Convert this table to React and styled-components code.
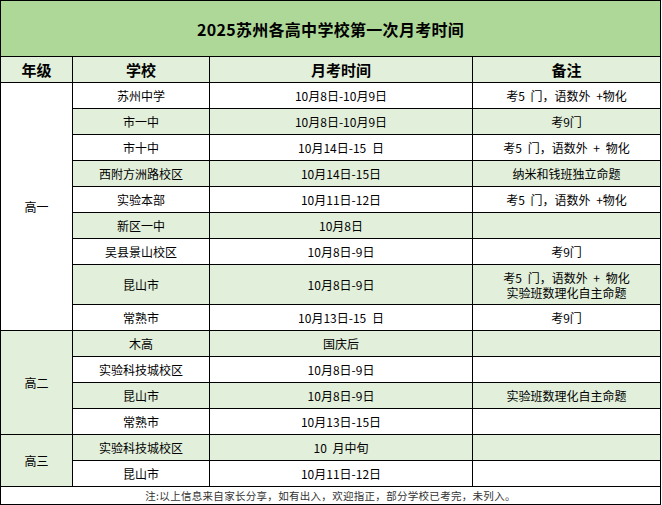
import React from 'react';
import styled, { createGlobalStyle } from 'styled-components';

const GlobalStyle = createGlobalStyle`
    html, body {
        margin: 0;
        padding: 0;
        background: #ffffff;
    }
    body {
        font-family: "Noto Sans CJK SC", "Liberation Sans", sans-serif;
        color: #000;
    }
`;

const groups = [
    {
        grade: '高一',
        bg: '#ffffff',
        rows: [
            { school: '苏州中学', date: '10月8日-10月9日', note: ['考5 门，语数外 +物化'] },
            { school: '市一中', date: '10月8日-10月9日', note: ['考9门'] },
            { school: '市十中', date: '10月14日-15 日', note: ['考5 门，语数外 + 物化'] },
            { school: '西附方洲路校区', date: '10月14日-15日', note: ['纳米和钱班独立命题'] },
            { school: '实验本部', date: '10月11日-12日', note: ['考5 门，语数外 +物化'] },
            { school: '新区一中', date: '10月8日', note: [] },
            { school: '吴县景山校区', date: '10月8日-9日', note: ['考9门'] },
            { school: '昆山市', date: '10月8日-9日', note: ['考5 门，语数外 + 物化', '实验班数理化自主命题'], tall: true },
            { school: '常熟市', date: '10月13日-15 日', note: ['考9门'] },
        ],
    },
    {
        grade: '高二',
        bg: '#e2efda',
        rows: [
            { school: '木高', date: '国庆后', note: [] },
            { school: '实验科技城校区', date: '10月8日-9日', note: [] },
            { school: '昆山市', date: '10月8日-9日', note: ['实验班数理化自主命题'] },
            { school: '常熟市', date: '10月13日-15日', note: [] },
        ],
    },
    {
        grade: '高三',
        bg: '#e2efda',
        rows: [
            { school: '实验科技城校区', date: '10 月中旬', note: [] },
            { school: '昆山市', date: '10月11日-12日', note: [] },
        ],
    },
];

const App = () => {
    let index = 0;
    return (
        <>
            <GlobalStyle />
            <Table>
                <colgroup>
                    <col style={{ width: 72 }} />
                    <col style={{ width: 137 }} />
                    <col style={{ width: 263 }} />
                    <col style={{ width: 188 }} />
                </colgroup>
                <tbody>
                    <TitleRow>
                        <TitleCell colSpan={4}>2025苏州各高中学校第一次月考时间</TitleCell>
                    </TitleRow>
                    <HeadRow>
                        <HeadCell>年级</HeadCell>
                        <HeadCell>学校</HeadCell>
                        <HeadCell>月考时间</HeadCell>
                        <HeadCell>备注</HeadCell>
                    </HeadRow>
                    {groups.map((group) =>
                        group.rows.map((row, i) => {
                            const shaded = index++ % 2 === 1;
                            return (
                                <DataRow key={group.grade + i} $tall={row.tall} $shaded={shaded}>
                                    {i === 0 && (
                                        <GradeCell rowSpan={group.rows.length} $bg={group.bg}>
                                            {group.grade}
                                        </GradeCell>
                                    )}
                                    <Cell>{row.school}</Cell>
                                    <Cell>{row.date}</Cell>
                                    <Cell>
                                        {row.note.map((line) => (
                                            <NoteLine key={line}>{line}</NoteLine>
                                        ))}
                                    </Cell>
                                </DataRow>
                            );
                        })
                    )}
                    <FootRow>
                        <FootCell colSpan={4}>
                            注:以上信息来自家长分享，如有出入，欢迎指正，部分学校已考完，未列入。
                        </FootCell>
                    </FootRow>
                </tbody>
            </Table>
        </>
    );
};

const Table = styled.table`
    width: 661px;
    border-collapse: collapse;
    table-layout: fixed;
    border: 1px solid #000;

    td {
        border: 1px solid #000;
        padding: 0;
        text-align: center;
        vertical-align: middle;
    }
`;

const TitleRow = styled.tr`
    height: 56px;
`;

const TitleCell = styled.td`
    background: #aed897;
    font-size: 16px;
    font-weight: bold;
    letter-spacing: 0.3px;
`;

const HeadRow = styled.tr`
    height: 26px;
    background: #e2efda;
`;

const HeadCell = styled.td`
    font-size: 15px;
    font-weight: bold;
`;

const DataRow = styled.tr`
    height: ${(p) => (p.$tall ? '40px' : '26px')};
    background: ${(p) => (p.$shaded ? '#e2efda' : '#ffffff')};
`;

const Cell = styled.td`
    font-size: 12px;
    line-height: 14px;
    word-spacing: 3px;
`;

const GradeCell = styled.td`
    font-size: 12px;
    background: ${(p) => p.$bg};
`;

const NoteLine = styled.div`
    line-height: 15px;
`;

const FootRow = styled.tr`
    height: 18px;
    background: #ffffff;
`;

const FootCell = styled.td`
    font-size: 10.5px;
    letter-spacing: 0.3px;
    color: #333;
    line-height: 12px;
`;

export default App;
